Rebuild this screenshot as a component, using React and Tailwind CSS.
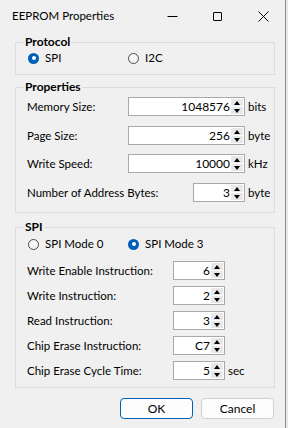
import React from "react";

function Tri({ up }) {
  return up ? (
    <div className="w-0 h-0 border-x-[3px] border-x-transparent border-b-[4px] border-b-black" />
  ) : (
    <div className="w-0 h-0 border-x-[3px] border-x-transparent border-t-[4px] border-t-black" />
  );
}

function Spin() {
  return (
    <div className="flex flex-col w-[13px] py-[1px] pr-[1px] gap-[1px]">
      <div className="flex-1 bg-[#e8e8e8] flex items-center justify-center">
        <Tri up />
      </div>
      <div className="flex-1 bg-[#e8e8e8] flex items-center justify-center">
        <Tri />
      </div>
    </div>
  );
}

function NumBox({ value, w }) {
  return (
    <div className={`flex h-[19px] bg-white border border-[#a9a9a9] ${w}`}>
      <div className="flex-1 text-right pr-[1px] leading-[17px] text-black text-[12px]">{value}</div>
      <Spin />
    </div>
  );
}

function Radio({ checked, label }) {
  return (
    <div className="flex items-center">
      {checked ? (
        <div className="w-[11px] h-[11px] rounded-full bg-[#005fb8] flex items-center justify-center">
          <div className="w-[4px] h-[4px] rounded-full bg-white" />
        </div>
      ) : (
        <div className="w-[11px] h-[11px] rounded-full border border-[#4a4a4a] bg-[#f7f7f7]" />
      )}
      <span className="ml-[6px] leading-[16px]">{label}</span>
    </div>
  );
}

function Row({ label, value, w, unit, unitW, className }) {
  return (
    <div className={`flex items-center h-[19px] ${className}`}>
      <div className="flex-1 leading-[16px]">{label}</div>
      <NumBox value={value} w={w} />
      <div className={`${unitW} pl-[3px] leading-[16px]`}>{unit}</div>
    </div>
  );
}

export default function App() {
  return (
    <div className="w-[288px] h-[428px] flex bg-[#e9e9e9] font-['Lato',sans-serif] text-[11.5px] text-black">
      <div className="w-[286px] h-full bg-[#f0f0f0] border-r border-[#8c8c8c] flex flex-col">
        {/* Title bar */}
        <div className="h-[34px] flex items-start">
          <div className="pl-[12px] pt-[8px] leading-[16px] flex-1">EEPROM Properties</div>
          <div className="flex items-center h-[32px] pr-[16px]">
            <svg width="11" height="11" viewBox="0 0 11 11" className="mr-[34px]">
              <line x1="0.5" y1="5.5" x2="10.5" y2="5.5" stroke="#000" strokeWidth="1" />
            </svg>
            <svg width="11" height="11" viewBox="0 0 11 11" className="mr-[35px]">
              <rect x="1.5" y="1.5" width="8" height="8" rx="0.5" fill="none" stroke="#000" strokeWidth="1" />
            </svg>
            <svg width="11" height="11" viewBox="0 0 11 11">
              <path d="M0.5 0.5 L10.5 10.5 M10.5 0.5 L0.5 10.5" stroke="#000" strokeWidth="1" />
            </svg>
          </div>
        </div>

        {/* Protocol */}
        <fieldset className="ml-[15px] w-[260px] border border-[#dcdcdc]">
          <legend className="ml-[8px] px-[1px] font-bold text-[12px] leading-[16px]">Protocol</legend>
          <div className="flex pl-[12px] pb-[8px] h-[24px]">
            <div className="w-[100px]">
              <Radio checked label="SPI" />
            </div>
            <Radio label="I2C" />
          </div>
        </fieldset>

        {/* Properties */}
        <fieldset className="mt-[4px] ml-[15px] w-[260px] border border-[#dcdcdc]">
          <legend className="ml-[8px] px-[1px] font-bold text-[12px] leading-[16px]">Properties</legend>
          <div className="flex flex-col pl-[11px] pt-[2px] pb-[10px]">
            <Row label="Memory Size:" value="1048576" w="w-[117px]" unit="bits" unitW="w-[29px]" />
            <Row label="Page Size:" value="256" w="w-[117px]" unit="byte" unitW="w-[29px]" className="mt-[10px]" />
            <Row label="Write Speed:" value="10000" w="w-[117px]" unit="kHz" unitW="w-[29px]" className="mt-[9px]" />
            <Row label="Number of Address Bytes:" value="3" w="w-[52px]" unit="byte" unitW="w-[29px]" className="mt-[10px]" />
          </div>
        </fieldset>

        {/* SPI */}
        <fieldset className="mt-[6px] ml-[15px] w-[260px] border border-[#dcdcdc]">
          <legend className="ml-[8px] px-[1px] font-bold text-[12px] leading-[16px]">SPI</legend>
          <div className="flex flex-col pl-[11px] pb-[7px]">
            <div className="flex pl-[1px] mt-[1px] h-[16px]">
              <div className="w-[100px]">
                <Radio label="SPI Mode 0" />
              </div>
              <Radio checked label="SPI Mode 3" />
            </div>
            <Row label="Write Enable Instruction:" value="6" w="w-[52px]" unit="" unitW="w-[49px]" className="mt-[9px]" />
            <Row label="Write Instruction:" value="2" w="w-[52px]" unit="" unitW="w-[49px]" className="mt-[6px]" />
            <Row label="Read Instruction:" value="3" w="w-[52px]" unit="" unitW="w-[49px]" className="mt-[6px]" />
            <Row label="Chip Erase Instruction:" value="C7" w="w-[52px]" unit="" unitW="w-[49px]" className="mt-[6px]" />
            <Row label="Chip Erase Cycle Time:" value="5" w="w-[52px]" unit="sec" unitW="w-[49px]" className="mt-[6px]" />
          </div>
        </fieldset>

        {/* Buttons */}
        <div className="mt-[10px] flex pl-[120px] gap-[8px]">
          <button className="w-[73px] h-[21px] rounded-[4px] border border-[#005fb8] bg-[#fdfdfd] leading-[17px] text-[12px]">OK</button>
          <button className="w-[73px] h-[21px] rounded-[4px] border border-[#d0d0d0] bg-[#fdfdfd] leading-[17px] text-[12px]">Cancel</button>
        </div>
      </div>
    </div>
  );
}
